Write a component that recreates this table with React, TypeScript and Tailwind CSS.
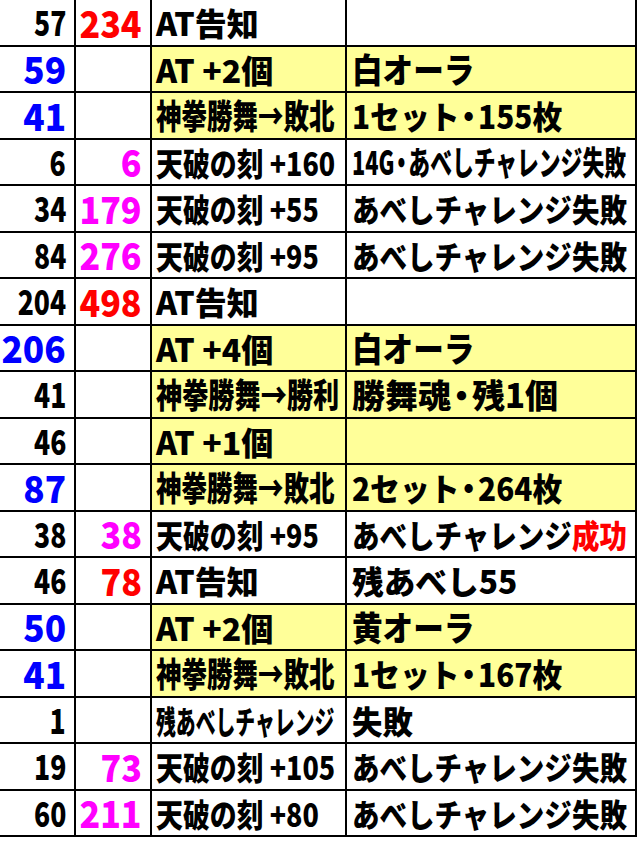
import React from 'react';

type Row = {
  a: string;
  aCls: string;
  b?: string;
  bCls?: string;
  c: React.ReactNode;
  cCls: string;
  d?: React.ReactNode;
  dCls?: string;
  hl?: boolean;
};

// tighter middle dot, like the condensed font in the sheet
const Dot = () => <span className="inline-block -mx-[6px]">・</span>;

// number styles
const blk = 'text-black text-[34px] scale-x-[0.78]';
const blu = 'text-[#0000ff] text-[37px] scale-x-[0.95]';
const red = 'text-[#ff0000] text-[37px] scale-x-[0.92]';
const mag = 'text-[#ff00ff] text-[37px] scale-x-[0.92]';

const tenpa = 'text-[32px] scale-x-[0.84]';
const shinken = 'text-[34px] scale-x-[0.75]';
const at = 'text-[32px] scale-x-[1]';
const abeshi = 'text-[32px] scale-x-[0.86]';
const set = 'text-[32px] scale-x-[0.93]';

const rows: Row[] = [
  { a: '57', aCls: blk, b: '234', bCls: red, c: 'AT告知', cCls: at },
  { a: '59', aCls: blu, c: 'AT +2個', cCls: at, d: '白オーラ', dCls: 'text-[34px] scale-x-[0.9]', hl: true },
  { a: '41', aCls: blu, c: '神拳勝舞→敗北', cCls: shinken, d: <>1セット<Dot />155枚</>, dCls: set, hl: true },
  { a: '6', aCls: blk, b: '6', bCls: mag, c: '天破の刻 +160', cCls: tenpa, d: <>14G<Dot />あべしチャレンジ失敗</>, dCls: 'text-[33px] scale-x-[0.66]' },
  { a: '34', aCls: blk, b: '179', bCls: mag, c: '天破の刻 +55', cCls: tenpa, d: 'あべしチャレンジ失敗', dCls: abeshi },
  { a: '84', aCls: blk, b: '276', bCls: mag, c: '天破の刻 +95', cCls: tenpa, d: 'あべしチャレンジ失敗', dCls: abeshi },
  { a: '204', aCls: blk, b: '498', bCls: red, c: 'AT告知', cCls: at },
  { a: '206', aCls: blu, c: 'AT +4個', cCls: at, d: '白オーラ', dCls: 'text-[34px] scale-x-[0.9]', hl: true },
  { a: '41', aCls: blk, c: '神拳勝舞→勝利', cCls: 'text-[34px] scale-x-[0.77]', d: <>勝舞魂<Dot />残1個</>, dCls: 'text-[33px] scale-x-[1]', hl: true },
  { a: '46', aCls: blk, c: 'AT +1個', cCls: at, d: '', hl: true },
  { a: '87', aCls: blu, c: '神拳勝舞→敗北', cCls: shinken, d: <>2セット<Dot />264枚</>, dCls: set, hl: true },
  {
    a: '38', aCls: blk, b: '38', bCls: mag, c: '天破の刻 +95', cCls: tenpa,
    d: (<>あべしチャレンジ<span className="text-[#ff0000]">成功</span></>), dCls: abeshi,
  },
  { a: '46', aCls: blk, b: '78', bCls: red, c: 'AT告知', cCls: at, d: '残あべし55', dCls: 'text-[32px] scale-x-[0.99]' },
  { a: '50', aCls: blu, c: 'AT +2個', cCls: at, d: '黄オーラ', dCls: 'text-[34px] scale-x-[0.9]', hl: true },
  { a: '41', aCls: blu, c: '神拳勝舞→敗北', cCls: shinken, d: <>1セット<Dot />167枚</>, dCls: set, hl: true },
  { a: '1', aCls: blk, c: '残あべしチャレンジ', cCls: 'text-[32px] scale-x-[0.62]', d: '失敗', dCls: 'text-[32px] scale-x-[0.95]' },
  { a: '19', aCls: blk, b: '73', bCls: mag, c: '天破の刻 +105', cCls: tenpa, d: 'あべしチャレンジ失敗', dCls: abeshi },
  { a: '60', aCls: blk, b: '211', bCls: mag, c: '天破の刻 +80', cCls: tenpa, d: 'あべしチャレンジ失敗', dCls: abeshi },
];

const cell = 'h-[46.5px] border-r-2 border-b-2 border-black flex items-center';

const App: React.FC = () => {
  return (
    <div className="w-[640px] h-[842px] bg-white font-['Noto_Sans_CJK_JP',sans-serif] font-black">
      <div className="grid grid-cols-[76px_76px_195px_290px]">
        {rows.map((r, i) => (
          <React.Fragment key={i}>
            {/* count */}
            <div className={`${cell} justify-end pr-[8px]`}>
              <span className={`inline-block shrink-0 whitespace-nowrap leading-none origin-right ${r.aCls}`}>{r.a}</span>
            </div>
            {/* games */}
            <div className={`${cell} justify-end pr-[8px]`}>
              {r.b && (
                <span className={`inline-block shrink-0 whitespace-nowrap leading-none origin-right ${r.bCls}`}>{r.b}</span>
              )}
            </div>
            {/* event */}
            <div className={`${cell} pl-[4px] text-black ${r.hl ? 'bg-[#ffff99]' : 'bg-white'}`}>
              <span className={`inline-block shrink-0 whitespace-nowrap leading-none origin-left ${r.cCls}`}>{r.c}</span>
            </div>
            {/* result */}
            <div className={`${cell} pl-[5px] text-black ${r.hl ? 'bg-[#ffff99]' : 'bg-white'}`}>
              {r.d && (
                <span className={`inline-block shrink-0 whitespace-nowrap leading-none origin-left ${r.dCls}`}>{r.d}</span>
              )}
            </div>
          </React.Fragment>
        ))}
      </div>
    </div>
  );
};

export default App;
